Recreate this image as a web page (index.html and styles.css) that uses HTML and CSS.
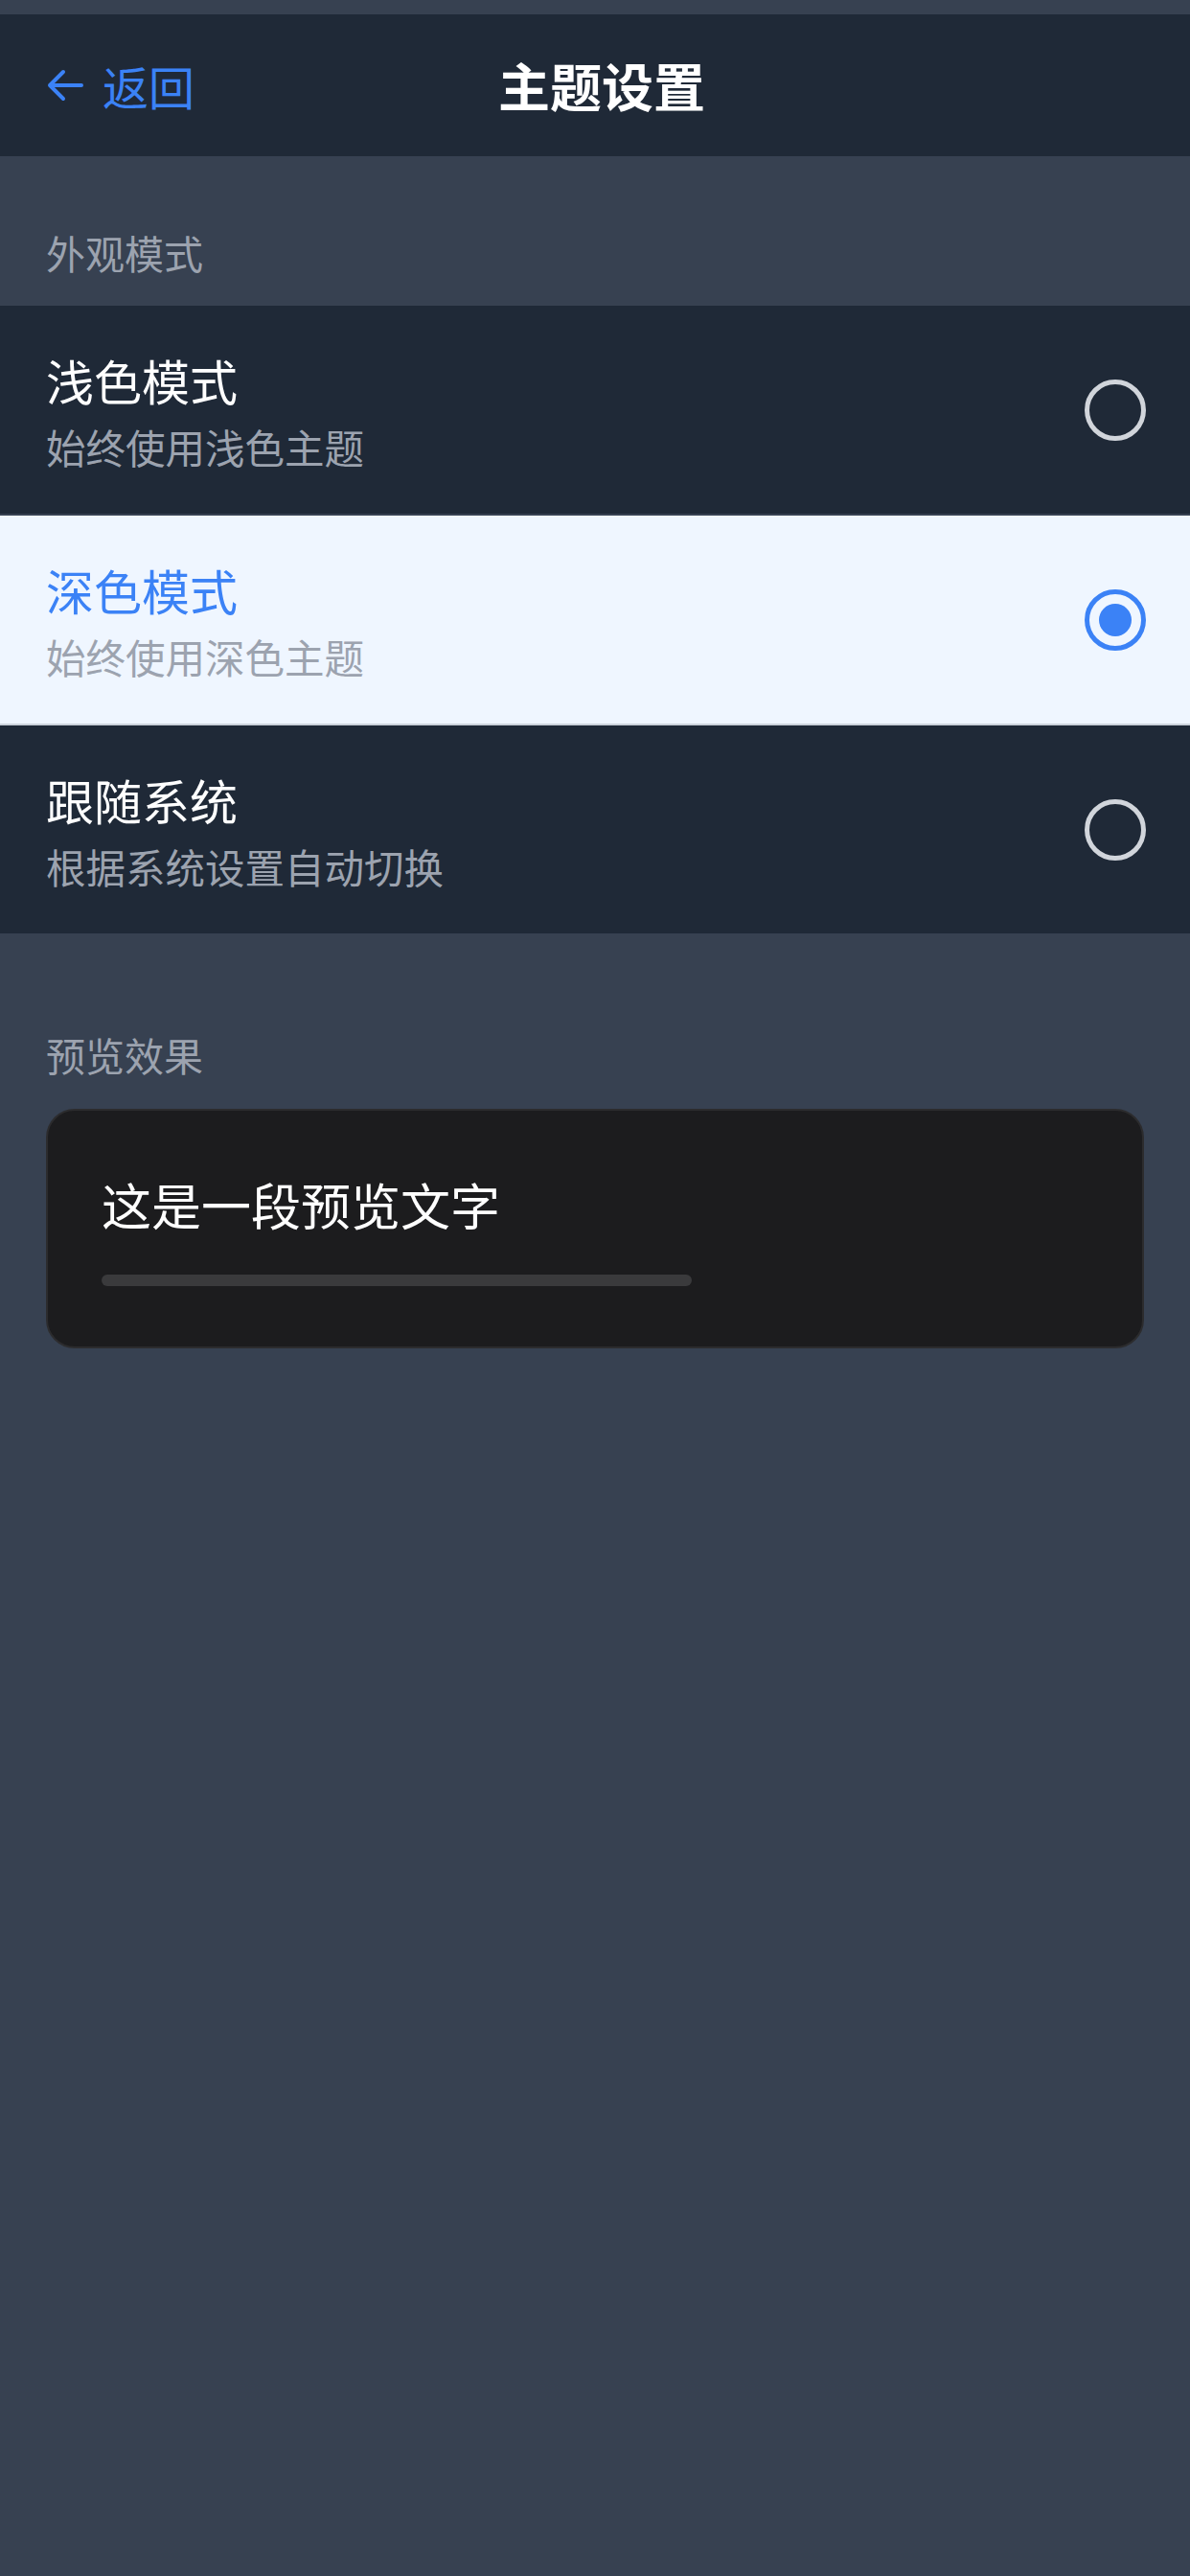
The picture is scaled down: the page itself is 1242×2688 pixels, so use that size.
FILE: index.html
```html
<!DOCTYPE html>
<html lang="zh-CN">
<head>
	<meta charset="UTF-8">
	<meta name="viewport" content="width=device-width, initial-scale=1">
	<title>主题设置</title>
	<link rel="stylesheet" href="styles.css">
</head>
<body>
	<header class="header">
		<a class="back" href="#">
			<svg class="back-icon" width="40" height="36" viewBox="0 0 40 36">
				<path d="M37 18H4M18 4L4 18L18 32" fill="none" stroke="currentColor" stroke-width="4" stroke-linecap="round" stroke-linejoin="round"/>
			</svg>
			<span>返回</span>
		</a>
		<h1 class="title">主题设置</h1>
		<div></div>
	</header>

	<p class="section-label">外观模式</p>
	<div class="options">
		<div class="option">
			<div class="option-text">
				<div class="option-title">浅色模式</div>
				<div class="option-desc">始终使用浅色主题</div>
			</div>
			<span class="radio"></span>
		</div>
		<div class="option selected">
			<div class="option-text">
				<div class="option-title">深色模式</div>
				<div class="option-desc">始终使用深色主题</div>
			</div>
			<span class="radio"></span>
		</div>
		<div class="option">
			<div class="option-text">
				<div class="option-title">跟随系统</div>
				<div class="option-desc">根据系统设置自动切换</div>
			</div>
			<span class="radio"></span>
		</div>
	</div>

	<p class="section-label second">预览效果</p>
	<div class="preview">
		<p class="preview-text">这是一段预览文字</p>
		<div class="preview-bar"></div>
	</div>
</body>
</html>
```

FILE: styles.css
```css
* {
	box-sizing: border-box;
}
body {
	margin: 0;
	padding-top: 15px;
	min-height: 2688px;
	background-color: #374151;
	font-family: "Noto Sans CJK SC", "Noto Sans", sans-serif;
	color: #fff;
}
.header {
	display: grid;
	grid-template-columns: 1fr auto 1fr;
	align-items: center;
	height: 148px;
	padding: 0 48px;
	background-color: #1f2937;
}
.back {
	display: flex;
	align-items: center;
	gap: 19px;
	color: #3b82f6;
	font-size: 48px;
	line-height: 1;
	text-decoration: none;
}
.back-icon {
	display: block;
}
.title {
	margin: 0 0 0 14px;
	font-size: 54px;
	font-weight: 700;
	line-height: 1.4;
}
.section-label {
	margin: 0;
	padding: 72px 48px 27px;
	font-size: 41px;
	line-height: 1.4;
	color: #9ca3af;
}
.section-label.second {
	padding-top: 96px;
}
.option {
	display: flex;
	align-items: center;
	justify-content: space-between;
	height: 219px;
	padding: 0 46px 0 48px;
	background-color: #1f2937;
	border-bottom: 2px solid #374151;
}
.option-text {
	display: flex;
	flex-direction: column;
	gap: 6px;
}
.option-title {
	font-size: 50px;
	line-height: 1.4;
	color: #fff;
}
.option-desc {
	font-size: 41.5px;
	line-height: 1.4;
	color: #9ca3af;
}
.radio {
	display: flex;
	align-items: center;
	justify-content: center;
	width: 64px;
	height: 64px;
	border: 5px solid #d1d5db;
	border-radius: 50%;
}
.option.selected {
	background-color: #eff6ff;
	border-bottom-color: #cbd2db;
}
.option.selected .option-title {
	color: #3b82f6;
}
.option.selected .radio {
	border-color: #3b82f6;
}
.option.selected .radio::after {
	content: "";
	width: 34px;
	height: 34px;
	border-radius: 50%;
	background-color: #3b82f6;
}
.preview {
	margin: 0 48px;
	padding: 62px 56px 63px;
	background-color: #1c1c1e;
	border: 2px solid #2c2c2e;
	border-radius: 30px;
}
.preview-text {
	margin: 0;
	font-size: 52px;
	line-height: 1.4;
}
.preview-bar {
	width: 616px;
	height: 12px;
	margin-top: 36px;
	border-radius: 6px;
	background-color: #3a3a3c;
}
```
